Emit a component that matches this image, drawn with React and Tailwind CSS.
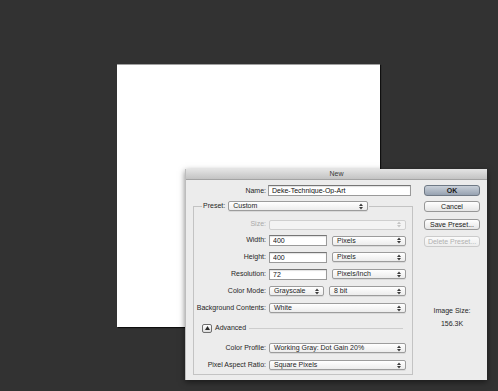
import React from "react";

// little up/down arrows used by the popup menus
const Arrows = ({ dim }) => (
  <svg width="4" height="7" viewBox="0 0 4 7" className="shrink-0">
    <path d="M0 3 L2 0.5 L4 3 Z" fill={dim ? "#c4c4c4" : "#3a3a3a"} />
    <path d="M0 4 L2 6.5 L4 4 Z" fill={dim ? "#c4c4c4" : "#3a3a3a"} />
  </svg>
);

const Select = ({ value, w, disabled }) => (
  <div
    className={`${w} h-[10px] flex items-center justify-between pl-[4px] pr-[4px] rounded-[2px] border ${
      disabled
        ? "border-[#cfcfcf] bg-[#f3f3f3]"
        : "border-[#9c9c9c] bg-gradient-to-b from-white to-[#ececec] shadow-[0_1px_0_rgba(0,0,0,0.08)]"
    }`}
  >
    <span className="text-[#1e1e1e] leading-[10px] whitespace-nowrap">{value}</span>
    <Arrows dim={disabled} />
  </div>
);

const Field = ({ value, w }) => (
  <input
    readOnly
    value={value}
    className={`${w} h-[11px] bg-white border border-[#9a9a9a] border-t-[#767676] shadow-[inset_0_1px_1px_rgba(0,0,0,0.12)] pl-[3px] text-[7px] leading-[9px] text-[#111] outline-none`}
  />
);

const Row = ({ label, h, dim, children }) => (
  <div className={`flex items-center ${h}`}>
    <span className={`w-[72px] text-right whitespace-nowrap ${dim ? "text-[#a9a9a9]" : "text-[#262626]"}`}>
      {label}
    </span>
    <div className="ml-[3px] flex items-center gap-[5px]">{children}</div>
  </div>
);

const Button = ({ label, primary, disabled }) => (
  <div
    className={`h-[11px] w-[56px] flex items-center justify-center rounded-[3px] border leading-[10px] ${
      primary
        ? "border-[#6f7985] bg-gradient-to-b from-[#c9d0d9] to-[#97a2b1] text-[#1a1a1a] font-bold"
        : disabled
        ? "border-[#cbcbcb] bg-gradient-to-b from-[#fbfbfb] to-[#ededed] text-[#b0b0b0]"
        : "border-[#979797] bg-gradient-to-b from-white to-[#e6e6e6] text-[#1a1a1a]"
    }`}
  >
    {label}
  </div>
);

export default function App() {
  return (
    <div className="relative w-[498px] h-[391px] overflow-hidden bg-[#323232] font-['Liberation_Sans',Arial,sans-serif] text-[7px]">
      {/* document canvas */}
      <div className="absolute left-[117px] top-[64px] w-[263px] h-[263px] bg-white border-t border-t-[#a0a0a0] shadow-[1px_1px_1px_rgba(0,0,0,0.7)]" />

      {/* New dialog */}
      <div className="absolute left-[185px] top-[169px] w-[302px] h-[211px] bg-[#ececec] border-l border-[#bdbdbd] shadow-[0_2px_6px_rgba(0,0,0,0.5)] flex flex-col">
        <div className="h-[11px] shrink-0 flex items-center justify-center bg-gradient-to-b from-[#e4e4e4] to-[#c3c3c3] border-b border-[#a3a3a3] text-[#3a3a3a] leading-[10px]">
          New
        </div>

        <div className="flex pl-[7px] pt-[5px]">
          {/* left column */}
          <div className="w-[220px] flex flex-col">
            <div className="flex items-center h-[12px]">
              <span className="w-[73px] text-right text-[#262626]">Name:</span>
              <div className="ml-[2px]">
                <Field value="Deke-Technique-Op-Art" w="w-[143px]" />
              </div>
            </div>

            <fieldset className="mt-[4px] w-[220px] border border-[#c3c3c3] pt-[5px]">
              <legend className="ml-[8px] px-[1px]">
                <span className="inline-flex items-center h-[10px]">
                  <span className="text-[#262626]">Preset:</span>
                  <span className="ml-[3px]">
                    <Select value="Custom" w="w-[140px]" />
                  </span>
                </span>
              </legend>

              <Row label="Size:" h="h-[16px]" dim>
                <Select value="" w="w-[137px]" disabled />
              </Row>
              <Row label="Width:" h="h-[16px]">
                <Field value="400" w="w-[58px]" />
                <Select value="Pixels" w="w-[74px]" />
              </Row>
              <Row label="Height:" h="h-[17px]">
                <Field value="400" w="w-[58px]" />
                <Select value="Pixels" w="w-[74px]" />
              </Row>
              <Row label="Resolution:" h="h-[17px]">
                <Field value="72" w="w-[58px]" />
                <Select value="Pixels/Inch" w="w-[74px]" />
              </Row>
              <Row label="Color Mode:" h="h-[17px]">
                <Select value="Grayscale" w="w-[55px]" />
                <Select value="8 bit" w="w-[77px]" />
              </Row>
              <Row label="Background Contents:" h="h-[17px]">
                <Select value="White" w="w-[137px]" />
              </Row>

              <div className="mt-[2px] h-[19px] flex items-center">
                <div className="ml-[8px] w-[10px] h-[9px] flex items-center justify-center rounded-[2px] border border-[#6e6e6e] bg-gradient-to-b from-white to-[#dcdcdc]">
                  <svg width="5" height="4" viewBox="0 0 5 4">
                    <path d="M0 4 L2.5 0 L5 4 Z" fill="#2a2a2a" />
                  </svg>
                </div>
                <span className="ml-[3px] text-[#262626]">Advanced</span>
                <div className="ml-[3px] mr-[9px] flex-1 h-px bg-[#cdcdcd]" />
              </div>

              <div className="mt-[2px]">
                <Row label="Color Profile:" h="h-[17px]">
                  <Select value="Working Gray:  Dot Gain 20%" w="w-[137px]" />
                </Row>
                <Row label="Pixel Aspect Ratio:" h="h-[17px]">
                  <Select value="Square Pixels" w="w-[137px]" />
                </Row>
              </div>
            </fieldset>
          </div>

          {/* right column */}
          <div className="ml-[11px] w-[56px] flex flex-col items-center">
            <Button label="OK" primary />
            <div className="mt-[5px]">
              <Button label="Cancel" />
            </div>
            <div className="mt-[7px]">
              <Button label="Save Preset..." />
            </div>
            <div className="mt-[6px]">
              <Button label="Delete Preset..." disabled />
            </div>
            <div className="mt-[59px] leading-[10px] text-[#262626]">Image Size:</div>
            <div className="mt-[3px] leading-[10px] text-[#262626]">156.3K</div>
          </div>
        </div>
      </div>
    </div>
  );
}
